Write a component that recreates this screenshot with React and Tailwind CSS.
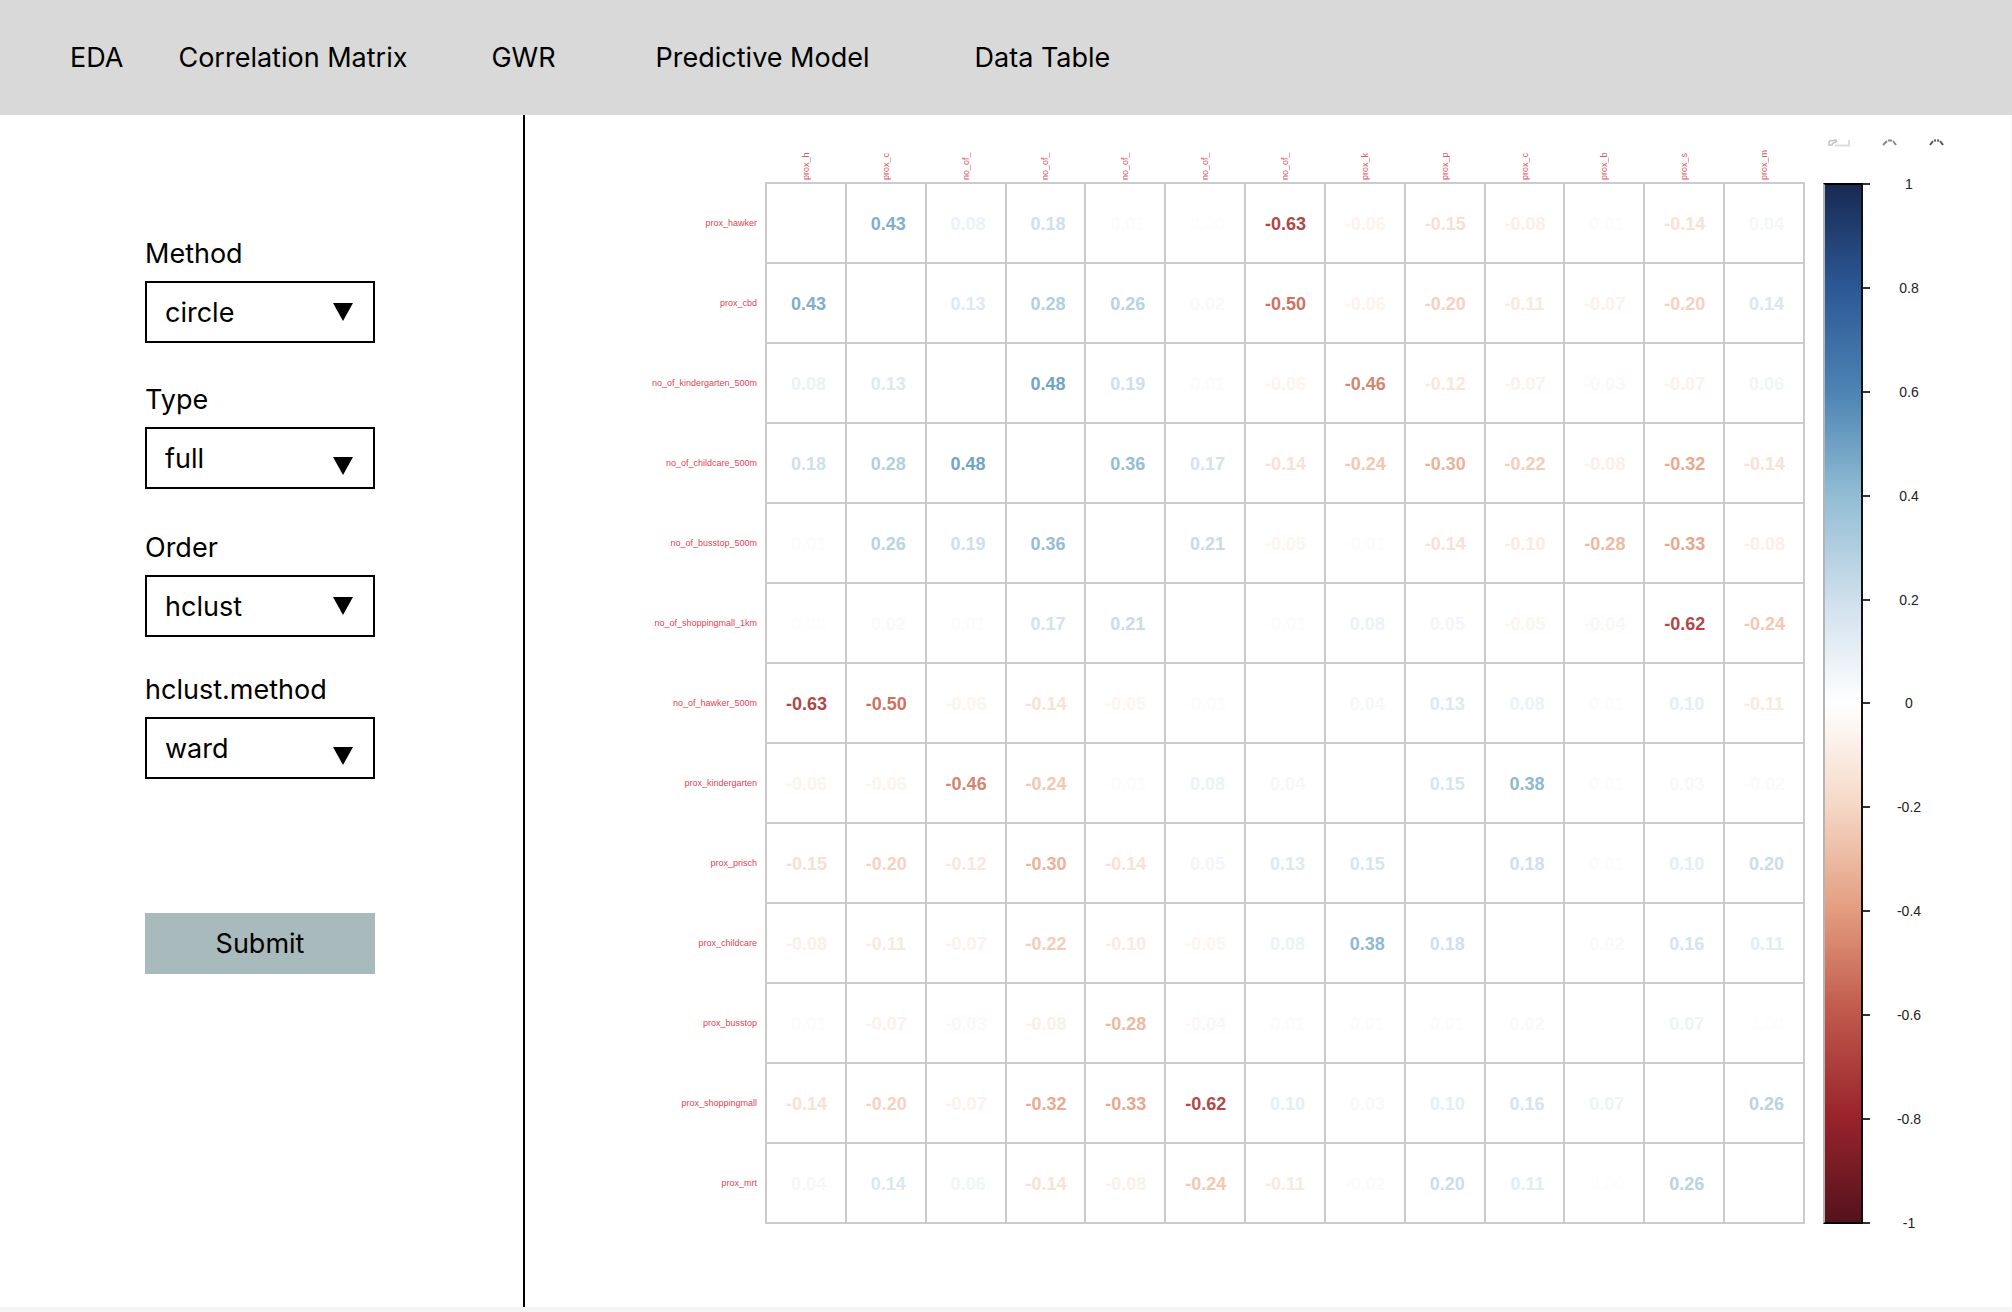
const NAV = [
  { label: "EDA", space: "ml-[70px]" },
  { label: "Correlation Matrix", space: "ml-[55px]" },
  { label: "GWR", space: "ml-[84px]" },
  { label: "Predictive Model", space: "ml-[100px]" },
  { label: "Data Table", space: "ml-[105px]" },
];

const FIELDS = [
  { id: "method", label: "Method", options: ["circle"], space: "mt-[122px]" },
  { id: "type", label: "Type", options: ["full"], space: "mt-10", low: true },
  { id: "order", label: "Order", options: ["hclust"], space: "mt-[42px]" },
  { id: "hclust-method", label: "hclust.method", options: ["ward"], space: "mt-9", low: true },
];

const VARIABLES = [
  "prox_hawker",
  "prox_cbd",
  "no_of_kindergarten_500m",
  "no_of_childcare_500m",
  "no_of_busstop_500m",
  "no_of_shoppingmall_1km",
  "no_of_hawker_500m",
  "prox_kindergarten",
  "prox_prisch",
  "prox_childcare",
  "prox_busstop",
  "prox_shoppingmall",
  "prox_mrt",
];

const MATRIX = [
  [null, 0.43, 0.08, 0.18, 0.01, 0.0, -0.63, -0.06, -0.15, -0.08, 0.01, -0.14, 0.04],
  [0.43, null, 0.13, 0.28, 0.26, 0.02, -0.5, -0.06, -0.2, -0.11, -0.07, -0.2, 0.14],
  [0.08, 0.13, null, 0.48, 0.19, 0.01, -0.06, -0.46, -0.12, -0.07, -0.03, -0.07, 0.06],
  [0.18, 0.28, 0.48, null, 0.36, 0.17, -0.14, -0.24, -0.3, -0.22, -0.08, -0.32, -0.14],
  [0.01, 0.26, 0.19, 0.36, null, 0.21, -0.05, -0.01, -0.14, -0.1, -0.28, -0.33, -0.08],
  [0.0, 0.02, 0.01, 0.17, 0.21, null, -0.01, 0.08, 0.05, -0.05, -0.04, -0.62, -0.24],
  [-0.63, -0.5, -0.06, -0.14, -0.05, -0.01, null, 0.04, 0.13, 0.08, 0.01, 0.1, -0.11],
  [-0.06, -0.06, -0.46, -0.24, -0.01, 0.08, 0.04, null, 0.15, 0.38, 0.01, 0.03, -0.02],
  [-0.15, -0.2, -0.12, -0.3, -0.14, 0.05, 0.13, 0.15, null, 0.18, 0.01, 0.1, 0.2],
  [-0.08, -0.11, -0.07, -0.22, -0.1, -0.05, 0.08, 0.38, 0.18, null, 0.02, 0.16, 0.11],
  [0.01, -0.07, -0.03, -0.08, -0.28, -0.04, 0.01, 0.01, 0.01, 0.02, null, 0.07, 0.0],
  [-0.14, -0.2, -0.07, -0.32, -0.33, -0.62, 0.1, 0.03, 0.1, 0.16, 0.07, null, 0.26],
  [0.04, 0.14, 0.06, -0.14, -0.08, -0.24, -0.11, -0.02, 0.2, 0.11, 0.0, 0.26, null],
];

// Colour ramp from strong negative to strong positive correlation.
const RAMP = [
  [-0.63, [176, 70, 70]],
  [-0.5, [206, 114, 96]],
  [-0.46, [212, 134, 112]],
  [-0.32, [233, 170, 143]],
  [-0.24, [243, 200, 176]],
  [-0.14, [249, 225, 213]],
  [-0.06, [253, 243, 239]],
  [0, [253, 253, 253]],
  [0.06, [240, 245, 250]],
  [0.14, [218, 231, 241]],
  [0.2, [202, 221, 235]],
  [0.28, [176, 208, 226]],
  [0.38, [142, 184, 211]],
  [0.48, [114, 163, 201]],
];

function rampColor(value) {
  const upper = RAMP.findIndex(([stop]) => stop >= value);
  if (upper <= 0) return `rgb(${RAMP[0][1].join(",")})`;
  const [a, from] = RAMP[upper - 1];
  const [b, to] = RAMP[upper];
  const t = (value - a) / (b - a);
  return `rgb(${from.map((c, i) => Math.round(c + (to[i] - c) * t)).join(",")})`;
}

const TICKS = ["1", "0.8", "0.6", "0.4", "0.2", "0", "-0.2", "-0.4", "-0.6", "-0.8", "-1"];

function Field({ id, label, options, space, low }) {
  return (
    <div className={space}>
      <label htmlFor={id} className="mb-[10px] block leading-[34px]">
        {label}
      </label>
      <div className="grid">
        <select
          id={id}
          className="col-start-1 row-start-1 h-[62px] w-full appearance-none rounded-none border-2 border-black bg-white pt-0.5 pr-12 pl-[18px]"
        >
          {options.map((o) => (
            <option key={o}>{o}</option>
          ))}
        </select>
        <svg
          viewBox="0 0 20 18"
          aria-hidden="true"
          className={
            low
              ? "pointer-events-none col-start-1 row-start-1 mt-4 mr-[22px] h-[18px] w-5 self-center justify-self-end"
              : "pointer-events-none col-start-1 row-start-1 mr-[22px] h-[18px] w-5 self-center justify-self-end"
          }
        >
          <path d="M0 0H20L10 18Z" fill="#000" />
        </svg>
      </div>
    </div>
  );
}

function CorrelationTable() {
  return (
    <table className="w-full table-fixed border-collapse font-['Liberation_Sans',Arial,sans-serif]">
      <colgroup>
        <col className="w-[120px]" />
        {VARIABLES.map((v) => (
          <col key={v} />
        ))}
      </colgroup>
      <thead>
        <tr className="h-[30px] align-bottom">
          <td />
          {VARIABLES.map((v) => (
            <th key={v} scope="col" className="p-0 pb-0.5">
              <div className="flex justify-center">
                <span className="block h-[26px] w-3 rotate-180 text-left text-[9px] leading-3 font-normal whitespace-nowrap text-[#e0555e] [writing-mode:vertical-rl]">
                  {v.slice(0, 6)}
                </span>
              </div>
            </th>
          ))}
        </tr>
      </thead>
      <tbody>
        {MATRIX.map((row, r) => (
          <tr key={VARIABLES[r]} className="h-20">
            <th
              scope="row"
              className="p-0 pr-2 text-right text-[9px] leading-3 font-normal whitespace-nowrap text-[#e0454f]"
            >
              {VARIABLES[r]}
            </th>
            {row.map((value, c) => (
              <td key={VARIABLES[c]} className="border-2 border-[#cbcbcb] p-0 pb-[3px] text-center">
                {value !== null && (
                  <span
                    className="inline-block w-10 text-right text-lg font-bold whitespace-nowrap"
                    style={{ color: rampColor(value) }}
                  >
                    {value.toFixed(2)}
                  </span>
                )}
              </td>
            ))}
          </tr>
        ))}
      </tbody>
    </table>
  );
}

function Legend() {
  return (
    <div className="flex pt-[30px] font-['Liberation_Sans',Arial,sans-serif]">
      <div className="w-10 border-2 border-y-black border-r-[#111] border-l-[#b5b5b5] bg-[linear-gradient(to_bottom,#182a52_0%,#2d5896_10%,#4c84b3_20%,#92bdd4_30%,#cfdfec_40%,#ffffff_50%,#f5d7c5_60%,#e39c7e_70%,#bf574a_80%,#98232b_90%,#54121c_100%)]" />
      <ol className="flex flex-col justify-between pt-px pb-px">
        {TICKS.map((t) => (
          <li key={t} className="flex h-0 items-center">
            <span className="h-0.5 w-[7px] bg-[#333]" />
            <span className="w-[78px] text-center text-sm text-[#222]">{t}</span>
          </li>
        ))}
      </ol>
    </div>
  );
}

function PlotIcons() {
  return (
    <svg viewBox="0 0 120 8" aria-hidden="true" className="h-2 w-[120px]" fill="none">
      <path d="M1 2V6H5M1 2L9 1M4 5L9 2" stroke="#c4c4c8" strokeWidth="1.500" />
      <path d="M7 6.500H21V1" stroke="#dcdce6" strokeWidth="2" />
      <path d="M55 6L59 2M60 1.500H64M65 2L68 6" stroke="#8a8a8a" strokeWidth="2" />
      <path d="M102 6L105 2M106 1.500H108M109 1.500H111M112 2L115 6" stroke="#555" strokeWidth="2" />
    </svg>
  );
}

export default function App() {
  return (
    <div className="flex min-h-screen flex-col border-b-[5px] border-[#f5f5f5] bg-white font-[Inter,sans-serif] text-[27px] text-black">
      <header className="bg-[#d9d9d9]">
        <nav className="flex h-[115px] items-center pt-0.5">
          {NAV.map(({ label, space }) => (
            <a key={label} href="#" className={`${space} whitespace-nowrap`}>
              {label}
            </a>
          ))}
        </nav>
      </header>
      <div className="flex flex-1">
        <aside className="w-[525px] shrink-0 border-r-2 border-black pr-[148px] pl-[145px]">
          <form onSubmit={(e) => e.preventDefault()}>
            {FIELDS.map((f) => (
              <Field key={f.id} {...f} />
            ))}
            <button type="submit" className="mt-[134px] h-[61px] w-full bg-[#a8babc] pt-0.5">
              Submit
            </button>
          </form>
        </aside>
        <main className="min-w-0 flex-1 border-r border-[#f5f5f5] pt-6 pr-[63px] pl-[121px]">
          <div className="flex justify-end">
            <PlotIcons />
          </div>
          <div className="mt-[6px] flex">
            <div className="min-w-0 flex-1 pr-[18px]">
              <CorrelationTable />
            </div>
            <Legend />
          </div>
        </main>
      </div>
    </div>
  );
}
